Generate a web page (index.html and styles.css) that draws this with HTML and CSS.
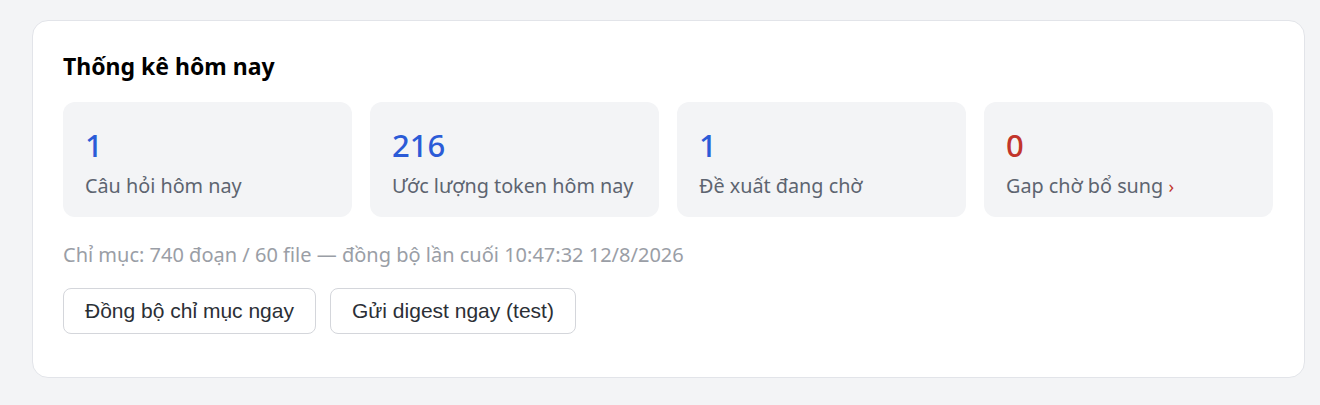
FILE: index.html
```html
<!DOCTYPE html>
<html lang="vi">
<head>
<meta charset="utf-8">
<link rel="stylesheet" href="styles.css">
</head>
<body>
<section class="card">
  <h2 class="title">Thống kê hôm nay</h2>
  <div class="stats">
    <div class="stat">
      <div class="num">1</div>
      <div class="label">Câu hỏi hôm nay</div>
    </div>
    <div class="stat">
      <div class="num">216</div>
      <div class="label">Ước lượng token hôm nay</div>
    </div>
    <div class="stat">
      <div class="num">1</div>
      <div class="label">Đề xuất đang chờ</div>
    </div>
    <div class="stat">
      <div class="num danger">0</div>
      <div class="label">Gap chờ bổ sung <span class="chev">›</span></div>
    </div>
  </div>
  <p class="meta">Chỉ mục: 740 đoạn / 60 file — đồng bộ lần cuối 10:47:32 12/8/2026</p>
  <div class="actions">
    <button class="btn">Đồng bộ chỉ mục ngay</button>
    <button class="btn">Gửi digest ngay (test)</button>
  </div>
</section>
</body>
</html>
```
FILE: styles.css
```css
html, body {
  margin: 0;
  padding: 0;
  background: #f3f4f6;
}
body {
  padding: 20px 15px 0 32px;
  font-family: "Noto Sans", "Open Sans", sans-serif;
}
.card {
  background: #ffffff;
  border: 1px solid #e2e4e9;
  border-radius: 16px;
  padding: 29px 31px 43px 30px;
}
.title {
  margin: 0 0 20px;
  font-size: 23px;
  font-weight: 700;
  color: #000;
  line-height: 32px;
}
.stats {
  display: grid;
  grid-template-columns: repeat(4, 1fr);
  gap: 18px;
}
.stat {
  background: #f3f4f6;
  border-radius: 12px;
  height: 115px;
  box-sizing: border-box;
  padding: 23px 22px 0;
}
.num {
  font-size: 31px;
  font-weight: 500;
  line-height: 40px;
  color: #2b5bd7;
}
.num.danger {
  color: #c2352b;
}
.label {
  margin-top: 6px;
  font-size: 19.8px;
  line-height: 30px;
  color: #5d6470;
}
.chev {
  color: #c2352b;
  font-size: 18px;
}
.meta {
  margin: 23px 0 0;
  font-size: 20px;
  line-height: 30px;
  color: #9a9ea6;
}
.actions {
  display: flex;
  gap: 14px;
  margin-top: 18px;
}
.btn {
  font-family: "Liberation Sans", Arial, sans-serif;
  font-size: 21px;
  color: #2b2f36;
  background: #fff;
  border: 1px solid #d4d6db;
  border-radius: 8px;
  height: 46px;
  padding: 0 21px;
  cursor: pointer;
}
```
